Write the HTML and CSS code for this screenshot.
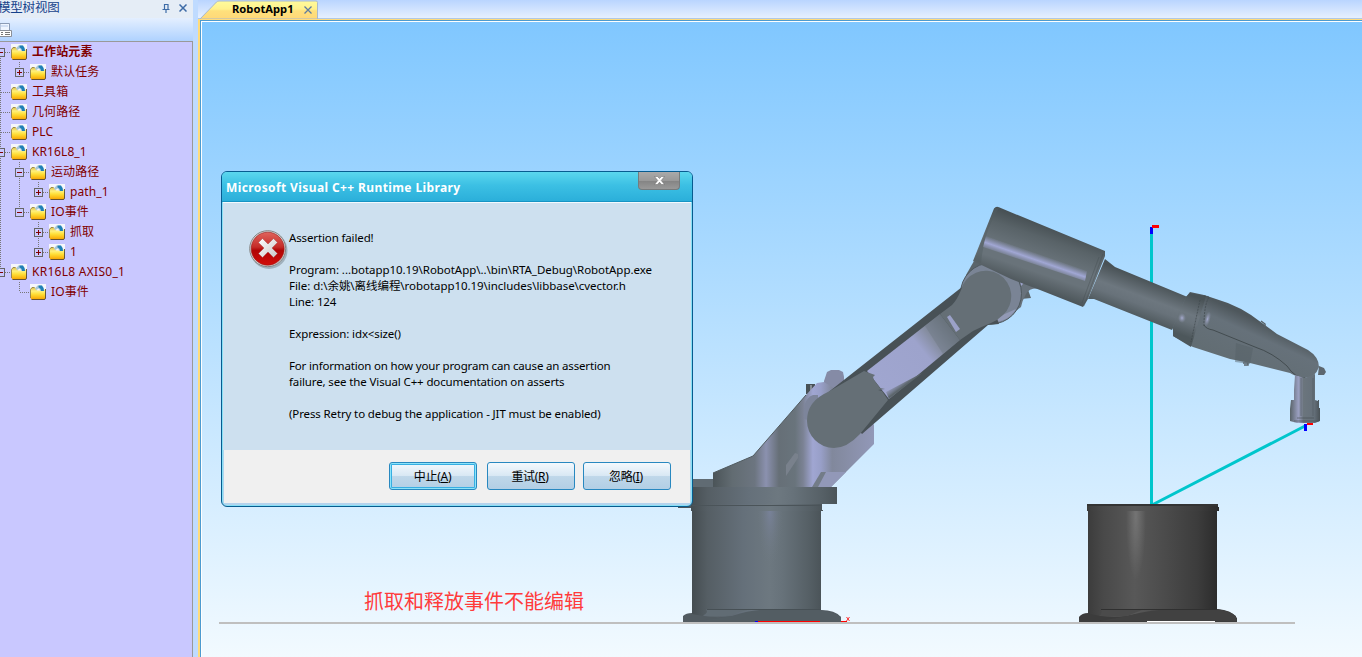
FILE: index.html
```html
<!DOCTYPE html>
<html lang="zh">
<head>
<meta charset="utf-8">
<title>RobotApp</title>
<link rel="stylesheet" href="styles.css">
</head>
<body>
<svg class="defs" aria-hidden="true">
  <defs>
    <linearGradient id="folder" x1="0" y1="0" x2="0" y2="1"><stop offset="0" stop-color="#dcc050"/><stop offset=".3" stop-color="#fff07c"/><stop offset=".55" stop-color="#ffe038"/><stop offset="1" stop-color="#f8a400"/></linearGradient>
    <symbol id="node" viewBox="0 0 16 16">
      <path d="M0 0h16v8H0z" fill="#f6f7fb"/>
      <path d="M.5 5.500 2 3.500h3l2 3h6.500L15.500 5v9l-1 1.500H1.500L.5 14z" fill="url(#folder)"/>
      <path d="M.5 14V5.500L2 3.500h2.500" fill="none" stroke="#8a7838" stroke-width=".8"/>
      <path d="M5 4.500 7.500 1.500h4L12 3q2 1.500 2 4h-3.500Q10 5 8.500 4.500L6.500 6z" fill="#a9c8d8"/>
      <path d="M8.500 1.500h3.500q2 2 2 5.500h-3Q11 4 8.500 3.500z" fill="#1f80b6"/>
      <path d="M15.600 5v9l-1 1.600H1.500" fill="none" stroke="#382c0c" stroke-width=".8"/>
    </symbol>
  </defs>
</svg>
<div class="app">
  <aside class="sidebar">
    <header class="side-title"><span class="side-name">模型树视图</span>
      <svg class="pin" viewBox="0 0 9 9"><path d="M2.500 0v5M6 0v5M2.500.5H6M.5 5.500h7M4 6v3" fill="none" stroke="#3d6ba6" stroke-width="1.200"/></svg>
      <svg class="side-x" viewBox="0 0 8 8"><path d="M.5.5l7 7M7.500.5l-7 7" stroke="#3d6ba6" stroke-width="1.500"/></svg>
    </header>
    <div class="side-tools"><svg viewBox="0 0 12 14"><path d="M0 .5h9.500V12H0z" fill="#eef5ff" stroke="#8a9bb5"/><path d="M0 3h8" stroke="#b5c9e8"/><path d="M-1 7.500h12.500v6H-1z" fill="#fff" stroke="#8a8f98"/><path d="M1 9.500h2M5 9.500h5M1 11.500h2M5 11.500h5" stroke="#777"/></svg></div>
    <div class="tree">
      <div class="row bold"><i class="g b h"><b class="box"></b></i><svg class="ico"><use href="#node"/></svg><span>工作站元素</span></div>
      <div class="row"><i class="g v"></i><i class="g t h"><b class="box plus"></b></i><svg class="ico"><use href="#node"/></svg><span>默认任务</span></div>
      <div class="row"><i class="g v h"></i><svg class="ico"><use href="#node"/></svg><span>工具箱</span></div>
      <div class="row"><i class="g v h"></i><svg class="ico"><use href="#node"/></svg><span>几何路径</span></div>
      <div class="row"><i class="g v h"></i><svg class="ico"><use href="#node"/></svg><span>PLC</span></div>
      <div class="row"><i class="g v h"><b class="box"></b></i><svg class="ico"><use href="#node"/></svg><span>KR16L8_1</span></div>
      <div class="row"><i class="g v"></i><i class="g v h"><b class="box"></b></i><svg class="ico"><use href="#node"/></svg><span>运动路径</span></div>
      <div class="row"><i class="g v"></i><i class="g v"></i><i class="g t h"><b class="box plus"></b></i><svg class="ico"><use href="#node"/></svg><span>path_1</span></div>
      <div class="row"><i class="g v"></i><i class="g t h"><b class="box"></b></i><svg class="ico"><use href="#node"/></svg><span>IO事件</span></div>
      <div class="row"><i class="g v"></i><i class="g"></i><i class="g v h"><b class="box plus"></b></i><svg class="ico"><use href="#node"/></svg><span>抓取</span></div>
      <div class="row"><i class="g v"></i><i class="g"></i><i class="g t h"><b class="box plus"></b></i><svg class="ico"><use href="#node"/></svg><span>1</span></div>
      <div class="row axis"><i class="g t h"><b class="box"></b></i><svg class="ico"><use href="#node"/></svg><span>KR16L8 AXIS0_1</span></div>
      <div class="row"><i class="g"></i><i class="g t h"></i><svg class="ico"><use href="#node"/></svg><span>IO事件</span></div>
    </div>
  </aside>
  <div class="splitter"></div>
  <main class="workspace">
    <div class="tabs">
      <svg class="tab-shape" viewBox="0 0 121 19"><defs><linearGradient id="tab" x1="0" y1="0" x2="0" y2="1"><stop offset="0" stop-color="#fffb9c"/><stop offset=".45" stop-color="#fff18c"/><stop offset=".55" stop-color="#ffe07c"/><stop offset="1" stop-color="#ffd878"/></linearGradient></defs><path d="M2 19 18.500 2Q19.500 1 21 1h97q1.500 0 1.500 1.500V19z" fill="url(#tab)" stroke="#a9b9cc"/></svg>
      <span class="tab-name">RobotApp1</span>
      <svg class="tab-x" viewBox="0 0 8 8"><path d="M.5.5l7 7M7.500.5l-7 7" stroke="#5d7ba0" stroke-width="1.300"/></svg>
    </div>
    <div class="view">
      <svg class="scene" viewBox="202 22 1160 635">
        <defs>
          <linearGradient id="drum" x1="0" x2="1" y1="0" y2="0"><stop offset="0" stop-color="#454d51"/><stop offset=".12" stop-color="#555e64"/><stop offset=".4" stop-color="#65707a"/><stop offset=".6" stop-color="#6d7880"/><stop offset=".7" stop-color="#67727a"/><stop offset=".9" stop-color="#566066"/><stop offset="1" stop-color="#4b5459"/></linearGradient>
          <radialGradient id="glow"><stop offset="0" stop-color="#7d86a4" stop-opacity=".75"/><stop offset="1" stop-color="#6d7880" stop-opacity="0"/></radialGradient>
          <linearGradient id="turret" gradientUnits="userSpaceOnUse" x1="713" x2="874" y1="0" y2="0"><stop offset="0" stop-color="#4b5458"/><stop offset=".12" stop-color="#626c72"/><stop offset=".26" stop-color="#6c7580"/><stop offset=".33" stop-color="#8b91af"/><stop offset=".41" stop-color="#666f77"/><stop offset=".51" stop-color="#69747c"/><stop offset=".56" stop-color="#7b8294"/><stop offset=".62" stop-color="#a0a6d2"/><stop offset=".67" stop-color="#989fc8"/><stop offset=".74" stop-color="#81889c"/><stop offset="1" stop-color="#9298b8"/></linearGradient>
          <linearGradient id="inner" gradientUnits="userSpaceOnUse" x1="875" y1="390" x2="955" y2="325"><stop offset="0" stop-color="#a0a6d0"/><stop offset=".6" stop-color="#9da3cc"/><stop offset=".75" stop-color="#858da0"/><stop offset="1" stop-color="#646e76"/></linearGradient>
          <linearGradient id="fade" gradientUnits="userSpaceOnUse" x1="905" y1="385" x2="899" y2="377"><stop offset="0" stop-color="#5c666c"/><stop offset="1" stop-color="#8b92ac" stop-opacity="0"/></linearGradient>
          <linearGradient id="barrel" gradientUnits="userSpaceOnUse" x1="1051" y1="227" x2="1030" y2="289"><stop offset="0" stop-color="#485155"/><stop offset=".2" stop-color="#596368"/><stop offset=".5" stop-color="#69737a"/><stop offset=".72" stop-color="#69737a"/><stop offset="1" stop-color="#4b5458"/></linearGradient>
          <linearGradient id="streak" gradientUnits="userSpaceOnUse" x1="1034" y1="252" x2="1029.500" y2="265"><stop offset="0" stop-color="#9ba1cc" stop-opacity="0"/><stop offset=".5" stop-color="#a1a7d4"/><stop offset="1" stop-color="#9ba1cc" stop-opacity="0"/></linearGradient>
          <linearGradient id="tube" gradientUnits="userSpaceOnUse" x1="1155" y1="282" x2="1141" y2="320"><stop offset="0" stop-color="#495256"/><stop offset=".45" stop-color="#6d777f"/><stop offset=".65" stop-color="#68727a"/><stop offset="1" stop-color="#4d575b"/></linearGradient>
          <linearGradient id="hand" gradientUnits="userSpaceOnUse" x1="1252" y1="318" x2="1232" y2="362"><stop offset="0" stop-color="#4e575c"/><stop offset=".3" stop-color="#66717a"/><stop offset="1" stop-color="#626d73"/></linearGradient>
          <linearGradient id="wrist" x1="0" x2="1" y1="0" y2="0"><stop offset="0" stop-color="#596369"/><stop offset=".28" stop-color="#9a9fc0"/><stop offset=".45" stop-color="#6b757d"/><stop offset=".8" stop-color="#65707a"/><stop offset="1" stop-color="#495257"/></linearGradient>
          <linearGradient id="post" x1="0" x2="1" y1="0" y2="0"><stop offset="0" stop-color="#3c3c3c"/><stop offset=".12" stop-color="#494949"/><stop offset=".36" stop-color="#585858"/><stop offset=".6" stop-color="#4b4b4b"/><stop offset=".85" stop-color="#3c3c3c"/><stop offset="1" stop-color="#2c2c2c"/></linearGradient>
          <radialGradient id="shine"><stop offset="0" stop-color="#fff" stop-opacity=".17"/><stop offset="1" stop-color="#fff" stop-opacity="0"/></radialGradient>
          <radialGradient id="spark"><stop offset="0" stop-color="#a6acd0"/><stop offset="1" stop-color="#8990a6" stop-opacity="0"/></radialGradient>
          <clipPath id="body"><path d="M680 506.500h150v100H680zM1080 507h150v100h-150z"/></clipPath>
        </defs>
        <path d="M219 623h1076" stroke="#bfbfbf" stroke-width="2"/>
        <path d="M1151.500 234v270M1153 504.500 1305 426" fill="none" stroke="#00c6cc" stroke-width="3"/>
        <path d="M1150 227h3v7h-3z" fill="#00f"/><path d="M1152 225h7v3h-7z" fill="red"/>

        <g class="robot">
          <path d="M678 505h14v3h-14z" fill="#4d565b"/>
          <path d="M683 622v-6q3-3 9-3v-6h129v3q14 0 20 7v5z" fill="#525b61"/>
          <path d="M692 503h129v107q-60-1-88 6-20 3-41-2z" fill="url(#drum)"/>
          <ellipse cx="770" cy="508" rx="13" ry="60" fill="url(#glow)" clip-path="url(#body)"/>
          <path d="M732 616q20-7 48-7h30q20 1 31 8v4H700z" fill="#535d63"/>
          <path d="M706 609.500q3 3-3 6 5 2 28 0l6-3 12-3z" fill="#616c74"/>
          <path d="M707 609.500h114" stroke="#475055"/>
          <path d="M691 504h131v6h1v1H691z" fill="url(#drum)"/><path d="M692 505.500h130" stroke="#4b5459"/>
          <path d="M690 479h24v9h-24z" fill="#606b73"/>
          <path d="M690 487h147v17H690z" fill="url(#drum)"/>
          <path d="M806 384h9v10h-9z" fill="#485156"/><path d="M810 385h2v8h-2z" fill="#868e96"/>
          <path d="M824 390v-9l3-9 4-2h8l4 2 1 5v17z" fill="#858ba6"/>
          <path d="M713 487v-14l40-17 53-61 11-12 7-1 40 25 10 18v19l-43 43z" fill="url(#turret)"/>
          <path d="m713 473 40-17 53-61" fill="none" stroke="#505a5f"/>
          <path d="M824 472h22l-15 15h-18z" fill="#9298b8"/><path d="m821 472-9 15h6l8-15z" fill="#737c88"/>
          <path d="m795 453 3 1v4l-12 18v-11z" fill="#79818c"/>
          <path d="M804 419q-2-20 9-24h5v10l-10 15z" fill="#7d859b"/>
        </g>

        <g class="upper">
          <path d="m974 261-8 14-5 18 20 10 50-5-9-25z" fill="#5b656b"/>
          <path d="M1012 268 1041 289Q1030 287 1026 294 1022 301 1021 307L1010 315z" fill="#68727c"/>
          <path d="m1019 277 8 3-6 6z" fill="#9fa5cf"/>
          <circle cx="991" cy="293.500" r="30.500" fill="#7a8495" stroke="#4f595f" stroke-width="1"/>
          <path d="m998 317 18-8q-8 13-23 13z" fill="#9299b5"/>
          <path d="m826 394 136-107 21-8 16 45-11 1-126 109z" fill="#485156"/>
          <path d="m867 371 73-57 20 26-71 59z" fill="url(#inner)"/>
          <path d="m925 326 15-12 20 26-17 14z" fill="#68727a" opacity=".35"/>
          <path d="m886 392 36-19-1 1-32 25z" fill="url(#fade)"/>
          <path d="m940 314 12-9q5-5 9-15a25.500 25.500 0 1 1 42 25q-5 5-12 8-10 4-18 8l-13 9z" fill="#656f76"/>
          <path d="m947 317 3-2 10 14-4 3z" fill="#9ba1c8"/>
          <path d="M864 371 828 392Q807 401 807 421A27 27 0 0 0 834 448Q847 448 860 434L888 400 882 391 878 390 885 389 880 388 874 380 873 377 875 375z" fill="#656f76"/>
          <path d="M994 208.500q2-2.500 5-1.200L1105 251v5l-17 43-5 8-43-17-29-11-38-18z" fill="url(#barrel)"/>
          <path d="m974 260 21-52h4q-15 22-18 55z" fill="#535d62" opacity=".45"/>
          <path d="m986 236 90 31 11 4-2 10-102-34z" fill="url(#streak)"/>
          <path d="m1103 254-19 52M1099 257l-17 46" stroke="#454e52" stroke-width=".8" opacity=".5"/>
          <path d="m1105 259 10 8 75 31-18 32-78-31h-6z" fill="url(#tube)"/>
          <path d="m1190 292 14 3 12 4q25 7 46 24l15 11 31 16q11 7 11 17-4 11-14 11-9-1-15-5l-40-10-20-4-37-12-20-11v-9l13-30z" fill="url(#hand)"/>
          <path d="m1190 293 16 3-15 51-18-11v-9l13-30z" fill="url(#tube)"/>
          <path d="M1204 296q3 0 5 1-5 8-5 29M1200 300l-9 42" fill="none" stroke="#3f484c" stroke-width=".7" stroke-dasharray="2 1"/>
          <ellipse cx="1182" cy="318" rx="4" ry="5" fill="url(#spark)"/><ellipse cx="1207.500" cy="319" rx="3" ry="8" fill="url(#spark)" transform="rotate(15 1207 319)"/>
          <path d="M1204 325q2 4 9 5l42 17q18 6 32 19 8 12 18 12" fill="none" stroke="#434c50"/>
          <path d="m1236 343-1 19 15 2 3-16z" fill="#556067" opacity=".45"/>
          <path d="m1261 321 4 3v3M1243 363h5v2h-4" fill="none" stroke="#596369" stroke-width="1.500"/>
          <path d="m1319 366 5 2 2 4-2 3h-6z" fill="#5d676f"/>
          <path d="m1295 375 10 3 10-4v26l3 1v-1h1v8h1v13l-5 2h-18l-7-2v-12l1-9h3v-10z" fill="url(#wrist)"/>
          <path d="M1301 378v38M1313 378v38" stroke="#515b61" opacity=".6"/>
          <path d="M1294 421h25M1297 418h17" stroke="#444d51" opacity=".6"/>
        </g>
        <path d="M1307 423h6v2h-6z" fill="red"/><path d="M1304 424h3v7h-3z" fill="#00f"/>
        <path d="M757 621.500h63M841 621.500h6" stroke="red"/><path d="M755 621.500h3" stroke="#00f"/><path d="m846.500 617 3 4m0-4-3 4" stroke="red" stroke-width=".8"/>

        <path d="M1079 622v-5q3-4 9-4v-4h129q15 1 20 9v4z" fill="#3c3c3c"/>
        <path d="M1088 508h129v102q-62-1-90 6-20 3-39-3z" fill="url(#post)"/>
        <ellipse cx="1136" cy="516" rx="10" ry="64" fill="url(#shine)" clip-path="url(#body)"/>
        <path d="M1127 616q25-7 50-7h40q13 2 19 7v5H1100z" fill="#414141"/>
        <path d="M1101 610q2 3-2 6h28l15-6z" fill="#4b4b4b"/><path d="M1101 609.500h116" stroke="#303030"/>
        <path d="M1087 504h131v3h1v4h-132z" fill="url(#post)"/><path d="M1087 505h131" stroke="#343434" stroke-width="2"/>
        <path d="M1147 621.500h68" stroke="#fff"/>
      </svg>
      <div class="note">抓取和释放事件不能编辑</div>

      <section class="dialog">
        <header class="dlg-title"><span>Microsoft Visual C++ Runtime Library</span>
          <div class="dlg-close"><svg viewBox="0 0 11 9"><path d="M.5.500h3l2 2 2-2h3L7.200 4.500l3.300 4h-3l-2-2.300-2 2.300h-3l3.300-4z" fill="#fff" stroke="#666" stroke-width=".5"/></svg></div>
        </header>
        <div class="dlg-body">
          <svg class="error" viewBox="0 0 40 40"><defs><linearGradient id="red" x1="0" y1="0" x2="0" y2="1"><stop offset="0" stop-color="#e0645c"/><stop offset=".45" stop-color="#c52c28"/><stop offset=".55" stop-color="#b00505"/><stop offset="1" stop-color="#d20d0a"/></linearGradient><linearGradient id="cross" x1="0" y1="0" x2="1" y2="1"><stop offset="0" stop-color="#fff"/><stop offset="1" stop-color="#c8c8c8"/></linearGradient></defs>
            <circle cx="20" cy="20.500" r="18.500" fill="#6b7780" opacity=".45"/><circle cx="18.700" cy="18.700" r="18" fill="#d4d4d4" stroke="#858585"/><circle cx="18.700" cy="18.700" r="16.500" fill="url(#red)" stroke="#9a1616" stroke-width=".6"/>
            <path d="m9.500 12.500 4-4 5.500 5.500 5.500-5.500 4 4-5.500 5.500 5.500 5.500-4 4-5.500-5.500-5.500 5.500-4-4 5.500-5.500z" fill="url(#cross)" stroke="#a33" stroke-width=".4"/></svg>
          <div class="message">
            <p>Assertion failed!</p>
            <p><span class="wide">Program: ...botapp10.19\RobotApp\..\bin\RTA_Debug\RobotApp.exe</span><br><span class="wide">File: d:\余姚\离线编程\robotapp10.19\includes\libbase\cvector.h</span><br>Line: 124</p>
            <p>Expression: idx&lt;size()</p>
            <p><span class="tight">For information on how your program can cause an assertion</span><br>failure, see the Visual C++ documentation on asserts</p>
            <p>(Press Retry to debug the application - JIT must be enabled)</p>
          </div>
        </div>
        <footer class="dlg-foot"><button class="btn focus">中止(<u>A</u>)</button><button class="btn">重试(<u>R</u>)</button><button class="btn">忽略(<u>I</u>)</button></footer>
      </section>
    </div>
  </main>
</div>
</body>
</html>
```
FILE: styles.css
```css
* { box-sizing: border-box; }
body { margin: 0; overflow: hidden; font: 12px/16px "Noto Sans", "Noto Sans CJK SC", sans-serif; color: #000; }
svg { display: block; }
.defs { position: absolute; width: 0; height: 0; }
.app { display: flex; width: 1362px; height: 657px; background: #bfdbff; }

.sidebar { width: 193px; display: flex; flex-direction: column; overflow: hidden; }
.side-title { height: 18px; display: flex; align-items: flex-start; background: #e5edf6; color: #16428b; white-space: nowrap; }
.side-name { width: 164px; margin-left: -2px; font-size: 12.500px; line-height: 15px; letter-spacing: -.2px; }
.pin { width: 9px; height: 9px; margin: 4px 0 0 0; }
.side-x { width: 8px; height: 8px; margin: 4px 0 0 8px; }
.side-tools { height: 23px; padding-top: 5px; background: linear-gradient(#e4efff, #afd2ff); }
.side-tools svg { width: 12px; height: 14px; }
.tree { flex: 1; background: #c9c8ff; border-top: 1px solid #999; border-right: 1px solid #999; color: #800000; overflow: hidden; }
.row { height: 20px; margin-left: -8px; display: flex; align-items: center; white-space: nowrap; }
.row span { margin-left: 5px; line-height: 20px; letter-spacing: .1px; }
.axis span { letter-spacing: .28px; }
.bold { font-weight: bold; }
.ico { width: 16px; height: 16px; flex: none; }
.g { position: relative; flex: none; width: 19px; height: 20px; }
.g::before { content: ""; position: absolute; left: 8px; top: 0; height: 0; width: 1px; background: repeating-linear-gradient(#777 0 1px, transparent 1px 2px); }
.v::before { height: 20px; }
.t::before { height: 10px; }
.b::before { top: 10px; height: 10px; }
.h::after { content: ""; position: absolute; left: 9px; right: 0; top: 10px; height: 1px; background: repeating-linear-gradient(90deg, #777 0 1px, transparent 1px 2px); }
.box { position: absolute; z-index: 1; left: 4px; top: 6px; width: 9px; height: 9px; border: 1px solid #666; background: linear-gradient(#800000, #800000) center / 5px 1px no-repeat #c9c8ff; }
.plus { background: linear-gradient(#800000, #800000) center / 5px 1px no-repeat, linear-gradient(#800000, #800000) center / 1px 5px no-repeat, #c9c8ff; }

.splitter { width: 5px; background: #bfdbff; }
.workspace { flex: 1; display: flex; flex-direction: column; background: #ffdc7c; }
.tabs { height: 19px; display: flex; align-items: flex-start; background: linear-gradient(#b9d5ff, #e6f0ff); border-bottom: 1px solid #b0c8e6; }
.tab-shape { width: 121px; height: 19px; margin-right: -121px; }
.tab-name { width: 72px; margin-left: 34px; font-weight: bold; font-size: 11.200px; line-height: 18px; z-index: 1; }
.tab-x { width: 8px; height: 8px; margin-top: 6px; z-index: 1; }
.view { position: relative; flex: 1; margin: 1px 0 0 2px; border-left: 1px solid #4d9bd0; border-top: 1px solid #4d9bd0; box-shadow: inset 1px 1px #fff; padding: 1px 0 0 1px; background: linear-gradient(#80c7ff, #f2faff); }
.scene { width: 1160px; height: 635px; }
.note { position: absolute; left: 163px; top: 567px; font-size: 20px; line-height: 28px; color: #ff3b3b; white-space: nowrap; }

.dialog { position: absolute; left: 20px; top: 150px; width: 472px; height: 336px; display: flex; flex-direction: column; padding: 0 1px 3px; border: 1px solid #075c90; border-radius: 6px; background: linear-gradient(#5bd6ee, #96e2f5 30px, #b4d3ed); overflow: hidden; box-shadow: inset 0 0 0 1px #87e0f5; }
.dlg-title { height: 30px; margin: 0 -1px; padding-left: 4px; display: flex; justify-content: space-between; background: linear-gradient(#5bd7ee, #3cc0e4 45%, #2bafda); border-bottom: 1px solid #1694c4; color: #fff; font-weight: bold; }
.dlg-title span { line-height: 31px; letter-spacing: .39px; white-space: nowrap; }
.dlg-close { width: 42px; height: 18px; margin-right: 12px; display: flex; justify-content: center; align-items: center; border: 1px solid #757b7d; border-top: 0; border-radius: 0 0 4px 4px; background: linear-gradient(#aaa, #999 50%, #858585 55%, #999); }
.dlg-close svg { width: 11px; height: 9px; }
.dlg-body { height: 248px; border-top: 1px solid #f2fafe; background: #cde0ef; display: flex; padding: 27px 0 0 26px; }
.error { width: 40px; height: 40px; flex: none; }
.message { font-size: 11.500px; letter-spacing: -.13px; }
.message p { margin: 0 0 16px; white-space: nowrap; }
.wide { letter-spacing: -.05px; }
.tight { letter-spacing: -.17px; }
.dlg-foot { height: 53px; margin: 0 1px; padding: 12px 19px 0; display: flex; justify-content: flex-end; gap: 8px; background: #f0f0f0; }
.btn { width: 88px; height: 28px; padding: 1px 2px 0 0; font: inherit; font-size: 12px; letter-spacing: -.3px; border: 1px solid #2888c0; border-radius: 3px; background: linear-gradient(#f4f9fd, #d9e8f4 48%, #bfd7e9 52%, #b2cfe5); }
.focus { padding: 1px 1px 0 0; margin-right: 2px; box-shadow: inset 0 0 0 1px #8be4fa, inset 0 0 0 2px #37aee2; }
```
